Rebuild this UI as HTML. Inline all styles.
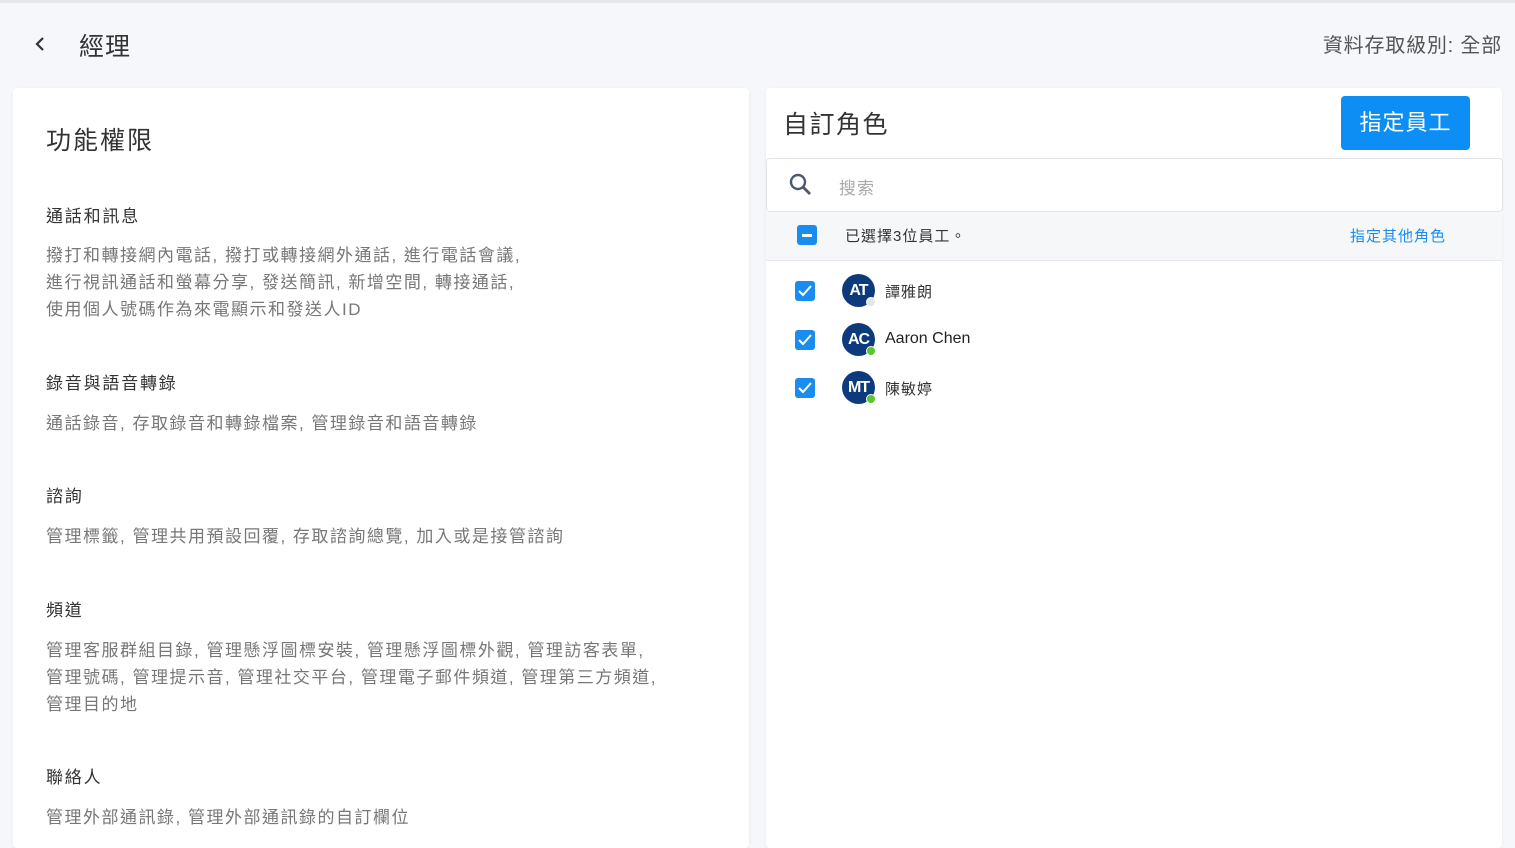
<!DOCTYPE html>
<html><head><meta charset="utf-8"><style>
body{margin:0;width:1515px;height:834px;overflow:hidden;background:#f6f7fb;font-family:"Liberation Sans","Noto Sans CJK TC",sans-serif;position:relative;color:#333}
.topline{position:absolute;left:0;top:0;width:1515px;height:3px;background:#e6e7ea}
.abs{position:absolute;white-space:nowrap}
.panel{position:absolute;background:#fff;top:88px;height:760px;border-radius:4px;box-shadow:0 1px 3px rgba(0,0,0,.06)}
.h{font-size:17px;color:#333;letter-spacing:1.8px}
.d{font-size:17px;color:#777;line-height:27px;letter-spacing:1.5px}
.cb{position:absolute;width:20px;height:20px;background:#1a8cf0;border-radius:3px}
.av{position:absolute;width:33px;height:33px;border-radius:50%;background:#0d3a7c;color:#fff;font-size:16px;font-weight:bold;text-align:center;line-height:33px;letter-spacing:-1px}
.dot{position:absolute;right:-1px;bottom:0;width:8px;height:8px;border-radius:50%;background:#5ac62d;border:1px solid #fff}
</style></head><body>
<div class="topline"></div>
<svg class="abs" style="left:33px;top:35px" width="14" height="18" viewBox="0 0 14 18"><path d="M10 3L4 9l6 6" stroke="#333" stroke-width="2.2" fill="none"/></svg>
<div class="abs" style="left:79px;top:27px;font-size:25px;color:#333;letter-spacing:1px">經理</div>
<div class="abs" style="right:13px;top:29px;font-size:20px;color:#555;letter-spacing:0.8px">資料存取級別: 全部</div>
<div class="panel" style="left:13px;width:736px">
 <div class="abs" style="left:33px;top:33px;font-size:25px;letter-spacing:2px">功能權限</div>
 <div class="abs h" style="left:33px;top:114px">通話和訊息</div>
 <div class="abs d" style="left:33px;top:154px">撥打和轉接網內電話, 撥打或轉接網外通話, 進行電話會議,<br>進行視訊通話和螢幕分享, 發送簡訊, 新增空間, 轉接通話,<br>使用個人號碼作為來電顯示和發送人ID</div>
 <div class="abs h" style="left:33px;top:281px">錄音與語音轉錄</div>
 <div class="abs d" style="left:33px;top:322px">通話錄音, 存取錄音和轉錄檔案, 管理錄音和語音轉錄</div>
 <div class="abs h" style="left:33px;top:394px">諮詢</div>
 <div class="abs d" style="left:33px;top:435px">管理標籤, 管理共用預設回覆, 存取諮詢總覽, 加入或是接管諮詢</div>
 <div class="abs h" style="left:33px;top:508px">頻道</div>
 <div class="abs d" style="left:33px;top:549px">管理客服群組目錄, 管理懸浮圖標安裝, 管理懸浮圖標外觀, 管理訪客表單,<br>管理號碼, 管理提示音, 管理社交平台, 管理電子郵件頻道, 管理第三方頻道,<br>管理目的地</div>
 <div class="abs h" style="left:33px;top:675px">聯絡人</div>
 <div class="abs d" style="left:33px;top:716px">管理外部通訊錄, 管理外部通訊錄的自訂欄位</div>
</div>
<div class="panel" style="left:766px;width:736px">
 <div class="abs" style="left:17px;top:17px;font-size:25px;letter-spacing:1.5px">自訂角色</div>
 <div class="abs" style="left:575px;top:8px;width:129px;height:54px;background:#0d8ef5;border-radius:4px;color:#fff;font-size:22px;text-align:center;line-height:54px;letter-spacing:1px">指定員工</div>
 <div class="abs" style="left:0;top:70px;width:735px;height:52px;border:1px solid #e2e4e8;border-radius:4px;background:#fff"></div>
 <svg class="abs" style="left:22px;top:84px" width="26" height="26" viewBox="0 0 26 26"><circle cx="10" cy="10" r="7" stroke="#4a5a6a" stroke-width="2.4" fill="none"/><path d="M15 15l7 7" stroke="#4a5a6a" stroke-width="2.8"/></svg>
 <div class="abs" style="left:73px;top:86px;font-size:17px;color:#aaa;letter-spacing:1px">搜索</div>
 <div class="abs" style="left:0;top:124px;width:736px;height:48px;background:#f6f7f9;border-bottom:1px solid #e6e8eb"></div>
 <div class="cb" style="left:31px;top:137px"><div style="position:absolute;left:5px;top:9px;width:10px;height:2.5px;background:#fff"></div></div>
 <div class="abs" style="left:79px;top:137px;font-size:15px;color:#333;letter-spacing:1px">已選擇3位員工。</div>
 <div class="abs" style="left:584px;top:137px;font-size:15px;color:#1a8cf0;letter-spacing:1px">指定其他角色</div>
 <div class="cb" style="left:29px;top:193px"><svg width="20" height="20"><path d="M4 10l4 4 8-9" stroke="#fff" stroke-width="2" fill="none"/></svg></div>
 <div class="av" style="left:76px;top:186px">AT<div class="dot" style="background:#e3e5e8"></div></div>
 <div class="abs" style="left:119px;top:193px;font-size:15px;letter-spacing:1px">譚雅朗</div>
 <div class="cb" style="left:29px;top:242px"><svg width="20" height="20"><path d="M4 10l4 4 8-9" stroke="#fff" stroke-width="2" fill="none"/></svg></div>
 <div class="av" style="left:76px;top:235px">AC<div class="dot"></div></div>
 <div class="abs" style="left:119px;top:242px;font-size:16px;color:#222">Aaron Chen</div>
 <div class="cb" style="left:29px;top:290px"><svg width="20" height="20"><path d="M4 10l4 4 8-9" stroke="#fff" stroke-width="2" fill="none"/></svg></div>
 <div class="av" style="left:76px;top:283px">MT<div class="dot"></div></div>
 <div class="abs" style="left:119px;top:290px;font-size:15px;letter-spacing:1px">陳敏婷</div>
</div>
</body></html>
